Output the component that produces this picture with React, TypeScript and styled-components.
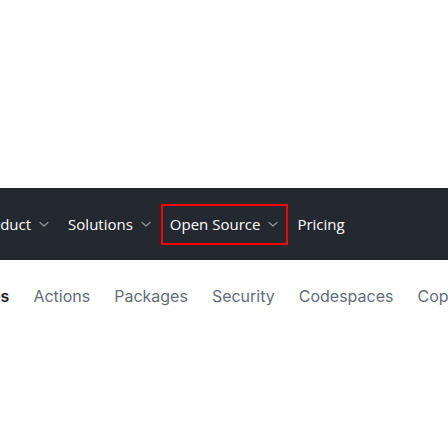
import styled, { createGlobalStyle } from 'styled-components';

const GlobalStyle = createGlobalStyle`
    html, body {
        margin: 0;
        padding: 0;
        background: #ffffff;
        overflow: hidden;
    }
`;

const mainNav = [
    { label: 'Product', dropdown: true },
    { label: 'Solutions', dropdown: true },
    { label: 'Open Source', dropdown: true, focused: true },
    { label: 'Pricing', dropdown: false },
];

const subNav = ['Features', 'Actions', 'Packages', 'Security', 'Codespaces', 'Copilot'];

const Chevron = () => (
    <ChevronSvg viewBox='0 0 12 12' aria-hidden='true'>
        <path d='M2 4.5 L6 8 L10 4.5' fill='none' stroke='currentColor' strokeWidth='1.3' strokeLinecap='round' strokeLinejoin='round' />
    </ChevronSvg>
);

export default function App() {
    return (
        <Page>
            <GlobalStyle />
            <Header>
                <NavList>
                    {mainNav.map((item) => (
                        <NavItem key={item.label} $focused={item.focused}>
                            {item.label}
                            {item.dropdown && <Chevron />}
                        </NavItem>
                    ))}
                </NavList>
            </Header>

            <SubNav>
                {subNav.map((label, i) => (
                    <SubNavLink key={label} $active={i === 0}>
                        {label}
                    </SubNavLink>
                ))}
            </SubNav>
        </Page>
    );
}

const Page = styled.div`
    width: 448px;
    height: 448px;
    overflow: hidden;
    padding-top: 188px;
    box-sizing: border-box;
`;

const Header = styled.header`
    height: 72px;
    background-color: #24292f;
    display: flex;
    align-items: center;
    overflow: hidden;
`;

const NavList = styled.nav`
    display: flex;
    align-items: center;
    margin-left: -33px;
    flex-shrink: 0;
`;

const NavItem = styled.div<{ $focused?: boolean }>`
    display: flex;
    align-items: center;
    gap: 7px;
    height: 41px;
    padding: 0 9px;
    box-sizing: border-box;
    font-family: 'Open Sans', 'Noto Sans', sans-serif;
    font-size: 15px;
    color: #ffffff;
    white-space: nowrap;
    outline: ${(p) => (p.$focused ? '2px solid #ff0000' : 'none')};
    outline-offset: -2px;
`;

const ChevronSvg = styled.svg`
    width: 12px;
    height: 12px;
    color: #8b949e;
    flex-shrink: 0;
`;

const SubNav = styled.nav`
    display: flex;
    align-items: center;
    gap: 24px;
    height: 36px;
    margin-top: 18px;
    margin-left: -58px;
    white-space: nowrap;
`;

const SubNavLink = styled.a<{ $active?: boolean }>`
    font-family: Inter, 'Noto Sans', sans-serif;
    font-size: 16px;
    font-weight: ${(p) => (p.$active ? 600 : 400)};
    color: ${(p) => (p.$active ? '#1f2328' : '#656d76')};
    flex-shrink: 0;
`;
